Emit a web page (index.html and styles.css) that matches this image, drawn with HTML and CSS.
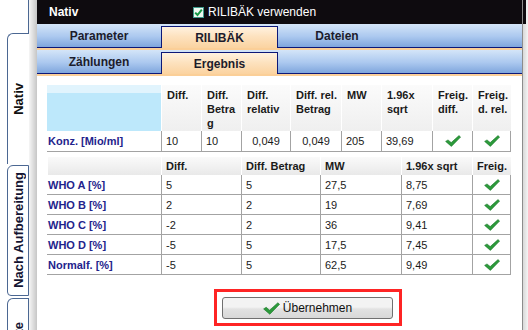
FILE: index.html
```html
<!DOCTYPE html>
<html lang="de">
<head>
  <meta charset="UTF-8">
  <title>Nativ – RILIBÄK Ergebnis</title>
  <link rel="stylesheet" href="styles.css">
</head>
<body>
  <div class="screen">
    <!-- vertikale Reiter links -->
    <div class="side">
      <div class="side-top"></div>
      <div class="vtab vtab-active"><span>Nativ</span></div>
      <div class="vtab vtab-end"><span>Nach Aufbereitung</span></div>
      <div class="vtab vtab-start"><span>Vergleichswerte</span></div>
    </div>
    <div class="shade"></div>

    <div class="window">
      <div class="titlebar">
        <span class="title-name">Nativ</span>
        <span class="title-check">
          <svg width="11" height="11" viewBox="0 0 11 11">
            <rect x="0.5" y="0.5" width="10" height="10" fill="#eefaf2" stroke="#3f9a8c"/>
            <path d="M2.2 5.6 L4.5 8 L8.8 2.6" fill="none" stroke="#169a46" stroke-width="2"/>
          </svg>
          RILIBÄK verwenden
        </span>
      </div>

      <!-- Reiter oben -->
      <div class="tabbar">
        <div class="tabrow">
          <div class="tab">Parameter</div>
          <div class="tab tab-active">RILIBÄK</div>
          <div class="tab tab-wide">Dateien</div>
        </div>
      </div>
      <div class="tabbar">
        <div class="tabrow">
          <div class="tab">Zählungen</div>
          <div class="tab tab-active">Ergebnis</div>
        </div>
      </div>

      <div class="content">
        <!-- Konzentration -->
        <div class="grid grid-main">
          <div class="hc hc-blue"></div>
          <div class="hc">Diff.</div>
          <div class="hc hc-break">Diff. Betrag</div>
          <div class="hc">Diff. relativ</div>
          <div class="hc">Diff. rel. Betrag</div>
          <div class="hc">MW</div>
          <div class="hc">1.96x sqrt</div>
          <div class="hc">Freig. diff.</div>
          <div class="hc">Freig. d. rel.</div>

          <div class="dc label">Konz. [Mio/ml]</div>
          <div class="dc">10</div>
          <div class="dc">10</div>
          <div class="dc mid">0,049</div>
          <div class="dc mid">0,049</div>
          <div class="dc">205</div>
          <div class="dc">39,69</div>
          <div class="dc mid"><svg class="ok" viewBox="0 0 16 12"><path d="M0.6 6.4 L3 4.9 L6.2 7.6 L14 0.6 L15.6 2.1 L6.4 11.4 Z"/></svg></div>
          <div class="dc mid last"><svg class="ok" viewBox="0 0 16 12"><path d="M0.6 6.4 L3 4.9 L6.2 7.6 L14 0.6 L15.6 2.1 L6.4 11.4 Z"/></svg></div>
        </div>

        <!-- WHO Klassen -->
        <div class="grid grid-who">
          <div class="hc"></div>
          <div class="hc">Diff.</div>
          <div class="hc">Diff. Betrag</div>
          <div class="hc">MW</div>
          <div class="hc">1.96x sqrt</div>
          <div class="hc">Freig.</div>

          <div class="dc label">WHO A [%]</div>
          <div class="dc">5</div>
          <div class="dc">5</div>
          <div class="dc">27,5</div>
          <div class="dc">8,75</div>
          <div class="dc mid last"><svg class="ok" viewBox="0 0 16 12"><path d="M0.6 6.4 L3 4.9 L6.2 7.6 L14 0.6 L15.6 2.1 L6.4 11.4 Z"/></svg></div>

          <div class="dc label">WHO B [%]</div>
          <div class="dc">2</div>
          <div class="dc">2</div>
          <div class="dc">19</div>
          <div class="dc">7,69</div>
          <div class="dc mid last"><svg class="ok" viewBox="0 0 16 12"><path d="M0.6 6.4 L3 4.9 L6.2 7.6 L14 0.6 L15.6 2.1 L6.4 11.4 Z"/></svg></div>

          <div class="dc label">WHO C [%]</div>
          <div class="dc">-2</div>
          <div class="dc">2</div>
          <div class="dc">36</div>
          <div class="dc">9,41</div>
          <div class="dc mid last"><svg class="ok" viewBox="0 0 16 12"><path d="M0.6 6.4 L3 4.9 L6.2 7.6 L14 0.6 L15.6 2.1 L6.4 11.4 Z"/></svg></div>

          <div class="dc label">WHO D [%]</div>
          <div class="dc">-5</div>
          <div class="dc">5</div>
          <div class="dc">17,5</div>
          <div class="dc">7,45</div>
          <div class="dc mid last"><svg class="ok" viewBox="0 0 16 12"><path d="M0.6 6.4 L3 4.9 L6.2 7.6 L14 0.6 L15.6 2.1 L6.4 11.4 Z"/></svg></div>

          <div class="dc label">Normalf. [%]</div>
          <div class="dc">-5</div>
          <div class="dc">5</div>
          <div class="dc">62,5</div>
          <div class="dc">9,49</div>
          <div class="dc mid last"><svg class="ok" viewBox="0 0 16 12"><path d="M0.6 6.4 L3 4.9 L6.2 7.6 L14 0.6 L15.6 2.1 L6.4 11.4 Z"/></svg></div>
        </div>

        <div class="actions">
          <div class="highlight">
            <button class="btn" type="button">
              <svg class="ok ok-btn" viewBox="0 0 16 12"><path d="M0.6 6.4 L3 4.9 L6.2 7.6 L14 0.6 L15.6 2.1 L6.4 11.4 Z"/></svg>
              Übernehmen
            </button>
          </div>
        </div>
      </div>
    </div>

    <div class="edge">
      <div class="edge-cap"></div>
    </div>
  </div>
</body>
</html>
```

FILE: styles.css
```css
/* Grundlayout */
body {
  margin: 0;
  background: #fff;
  font-family: "Liberation Sans", Arial, sans-serif;
  color: #1a1a1a;
}

.screen {
  display: flex;
  width: 528px;
  height: 330px;
  overflow: hidden;
}

/* Vertikale Reiter */
.side {
  width: 29px;
  padding-left: 7px;
  box-sizing: border-box;
  display: flex;
  flex-direction: column;
  flex-shrink: 0;
}

.side-top {
  height: 33px;
  border-right: 1px solid #4b6792;
  flex-shrink: 0;
}

.vtab {
  display: flex;
  flex-direction: column;
  align-items: center;
  justify-content: center;
  flex-shrink: 0;
  box-sizing: border-box;
  height: 131px;
  border: 1px solid #4b6792;
  border-radius: 6px 0 0 4px;
  background: #fff;
  overflow: hidden;
}

.vtab span {
  writing-mode: vertical-rl;
  transform: rotate(180deg);
  font-size: 13px;
  font-weight: bold;
  white-space: nowrap;
  color: #141432;
}

.vtab-active {
  border-right: none;
  border-bottom: none;
  border-radius: 6px 0 0 0;
}

.vtab-active span {
  color: #111;
}

.vtab-end {
  margin-top: 1px;
  justify-content: flex-end;
  padding-bottom: 7px;
}

.vtab-start {
  margin-top: 2px;
  justify-content: flex-start;
  padding-top: 23px;
  border-bottom: none;
  border-radius: 6px 0 0 0;
}

.shade {
  width: 8px;
  flex-shrink: 0;
  background: linear-gradient(to right, #f6f6f6, #c6c6c6);
}

/* Fenster */
.window {
  width: 485px;
  flex-shrink: 0;
  display: flex;
  flex-direction: column;
}

.titlebar {
  height: 24px;
  display: flex;
  align-items: center;
  background: #0e0b0f;
  color: #fff;
  font-size: 12px;
}

.title-name {
  width: 144px;
  padding-left: 12px;
  font-weight: bold;
}

.title-check {
  display: flex;
  align-items: center;
  gap: 4px;
}

/* Reiter oben */
.tabbar {
  padding-bottom: 2px;
  background: #fbcf98;
}

.tabrow {
  display: flex;
  height: 23px;
  background: linear-gradient(#d4e5f8, #abc8ef 55%, #7fa6dd);
  border-bottom: 1px solid #0c1878;
}

.tab {
  width: 124px;
  display: flex;
  align-items: center;
  justify-content: center;
  font-size: 12px;
  font-weight: bold;
  color: #1c1c2c;
}

.tab-wide {
  width: 118px;
}

.tab-active {
  width: 117px;
  box-sizing: border-box;
  margin-top: 2px;
  margin-bottom: -1px;
  border: 1px solid #0c1878;
  border-bottom: none;
  background: linear-gradient(#fff2e0, #fde2bf 45%, #fbd3a0);
}

/* Inhalt */
.content {
  flex: 1;
  padding: 9px 11px 0 10px;
  background: #fff;
}

.grid {
  display: grid;
  font-size: 11px;
}

.grid-main {
  grid-template-columns: 114px 40px 40px 49px 51px 40px 51px 40px 39px;
  grid-template-rows: 46px 21px;
}

.grid-who {
  margin-top: 5px;
  grid-template-columns: 114px 80px 79px 81px 71px 39px;
  grid-template-rows: 18px repeat(5, 20px);
}

.hc {
  box-sizing: border-box;
  padding: 3px 3px 0 5px;
  line-height: 14px;
  font-weight: bold;
  color: #1a1a1a;
  border-left: 1px solid #fff;
  background: linear-gradient(#fbfbfb, #efefef);
}

.grid-who .hc {
  padding: 2px 3px 0 4px;
  background: linear-gradient(#fafafa, #e9e9e9);
}

.hc-blue {
  border-left: none;
  background: linear-gradient(#e1f4fd 0 8px, #bde8fb 8px);
}

.hc-break {
  overflow-wrap: anywhere;
}

.dc {
  box-sizing: border-box;
  display: flex;
  align-items: center;
  padding-left: 4px;
  border-left: 1px solid #a3a3a3;
  border-bottom: 1px solid #a3a3a3;
  color: #1a1a1a;
  white-space: nowrap;
}

.dc.label {
  border-left: none;
  padding-left: 1px;
  font-weight: bold;
  color: #23238c;
}

.dc.mid {
  justify-content: center;
  padding-left: 0;
}

.dc.last {
  border-right: 1px solid #a3a3a3;
}

.ok {
  width: 16px;
  height: 12px;
  fill: #2c9a3b;
  stroke: #1d7a2b;
  stroke-width: 0.6;
}

/* Übernehmen */
.actions {
  margin-top: 14px;
  padding-left: 167px;
}

.highlight {
  box-sizing: border-box;
  width: 188px;
  height: 37px;
  padding: 5px 6px 4px 5px;
  border: 3px solid #fe2424;
}

.btn {
  width: 171px;
  height: 22px;
  display: flex;
  align-items: center;
  justify-content: center;
  gap: 3px;
  padding: 0;
  border: 1px solid #707070;
  border-radius: 3px;
  background: linear-gradient(#f3f3f3 0 45%, #e2e2e2 55%, #d8d8d8);
  font-family: "Liberation Sans", Arial, sans-serif;
  font-size: 12px;
  color: #111;
}

.ok-btn {
  width: 17px;
  height: 13px;
}

/* Rand rechts */
.edge {
  width: 6px;
  flex-shrink: 0;
  box-sizing: border-box;
  border-left: 1px solid #8c8c8c;
  background: linear-gradient(to right, #d8d8d8, #f4f4f4);
}

.edge-cap {
  height: 24px;
  background: linear-gradient(to right, #0e0b0f 0 3px, #f0f0f0 3px);
}
```
